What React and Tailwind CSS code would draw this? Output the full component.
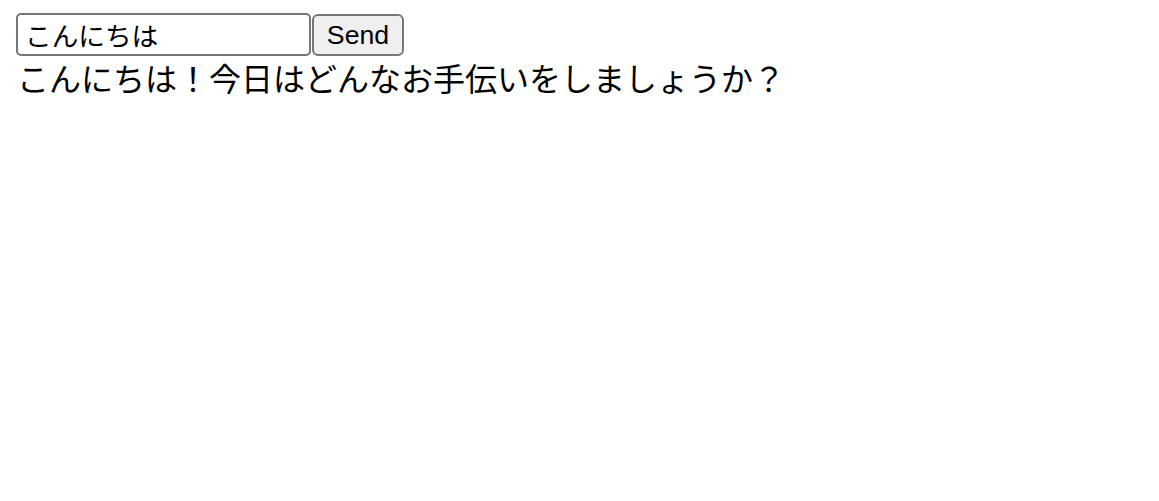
import { useState } from 'react';

export default function App() {
  const [text, setText] = useState('こんにちは');

  return (
    <div className="min-h-screen bg-white text-black pl-[16px] pt-[13px] font-['Liberation_Sans','Noto_Sans_CJK_JP',sans-serif]">
      {/* Input row */}
      <div className="flex items-end">
        <input
          type="text"
          value={text}
          onChange={(e) => setText(e.target.value)}
          className="w-[295px] h-[43px] border-2 border-[#767676] rounded-[5px] px-[7px] text-[26.67px] leading-none outline-none font-['Liberation_Sans','Noto_Sans_CJK_JP',sans-serif]"
        />
        <button
          type="button"
          className="ml-[1px] w-[92px] h-[42px] bg-[#efefef] border-2 border-[#767676] rounded-[6px] text-[26.67px] leading-none text-black font-['Liberation_Sans','Noto_Sans_CJK_JP',sans-serif]"
        >
          Send
        </button>
      </div>

      {/* Reply */}
      <div className="mt-[6px] text-[32px] leading-[36px] pl-[1px]">
        こんにちは！今日はどんなお手伝いをしましょうか？
      </div>
    </div>
  );
}
